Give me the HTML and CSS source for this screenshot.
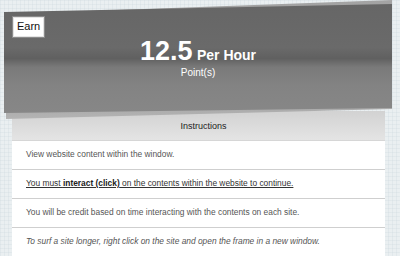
FILE: index.html
```html
<!DOCTYPE html>
<html lang="en">
<head>
    <meta charset="UTF-8">
    <meta name="viewport" content="width=device-width, initial-scale=1.0">
    <title>Earn</title>
    <link rel="stylesheet" href="styles.css">
</head>
<body>
    <div class="earn-panel">
        <div class="sheet sheet-back"></div>
        <div class="sheet sheet-front"></div>
        <span class="earn-tag">Earn</span>
        <div class="rate">
            <div class="rate-main"><span class="rate-value">12.5</span> <span class="rate-unit">Per Hour</span></div>
            <div class="rate-label">Point(s)</div>
        </div>
    </div>

    <table class="instructions">
        <thead>
            <tr><th>Instructions</th></tr>
        </thead>
        <tbody>
            <tr><td>View website content within the window.</td></tr>
            <tr><td class="must">You must <b>interact (click)</b> on the contents within the website to continue.</td></tr>
            <tr><td>You will be credit based on time interacting with the contents on each site.</td></tr>
            <tr><td class="tip">To surf a site longer, right click on the site and open the frame in a new window.</td></tr>
        </tbody>
    </table>
</body>
</html>
```

FILE: styles.css
```css
body {
    margin: 0;
    font-family: "Liberation Sans", Arial, sans-serif;
    background-color: #eaeff1;
    background-image:
        linear-gradient(90deg, rgba(200, 212, 218, 0.25) 1px, transparent 1px),
        linear-gradient(rgba(200, 212, 218, 0.25) 1px, transparent 1px);
    background-size: 4px 4px;
    overflow: hidden;
}
.earn-panel {
    position: relative;
    z-index: 1;
    height: 109px;
    margin: 4px 8px 0 4px;
}
.sheet {
    position: absolute;
    inset: 0;
}
.sheet-back {
    top: -4px;
    bottom: -6px;
    left: 2px;
    background: linear-gradient(#a4a4a4, #8c8c8c 60%, #b4b4b4);
    clip-path: polygon(0 14px, 100% 0, 100% calc(100% - 10px), 0 100%);
}
.sheet-front {
    background: linear-gradient(#666666 0%, #6a6a6a 40%, #606060 50%, #7a7a7a 58%, #838383 75%, #878787 100%);
    clip-path: polygon(0 8px, 100% 0, 100% 104px, 0 109px);
}
.earn-tag {
    position: absolute;
    top: 12px;
    left: 8px;
    padding: 3px 4px 4px;
    background: #fff;
    border: 1px solid #8a8a8a;
    box-shadow: inset 0 0 0 1px #e4e4e4;
    font-size: 11px;
    line-height: 13px;
    color: #111;
}
.rate {
    position: relative;
    padding-top: 34px;
    color: #fff;
    text-align: center;
}
.rate-main {
    line-height: 26px;
    font-weight: bold;
}
.rate-value {
    font-size: 27px;
}
.rate-unit {
    font-size: 14px;
}
.rate-label {
    font-size: 10px;
    line-height: 10px;
}
.instructions {
    width: 373px;
    margin: -2px 0 0 12px;
    border-collapse: collapse;
    background: #fff;
    font-size: 8.4px;
    color: #555;
}
.instructions th {
    height: 29px;
    padding: 0 0 0 10px;
    background: linear-gradient(#d2d2d2, #e4e4e4);
    border-bottom: 1px solid #d6d6d6;
    font-size: 9px;
    font-weight: normal;
    color: #222;
}
.instructions td {
    height: 26px;
    padding: 0 0 2px 14px;
    border-bottom: 1px solid #cfcfcf;
}
.instructions .must {
    text-decoration: underline;
    color: #333;
}
.instructions .must b {
    color: #222;
}
.instructions .tip {
    font-style: italic;
    border-bottom: none;
}
```
